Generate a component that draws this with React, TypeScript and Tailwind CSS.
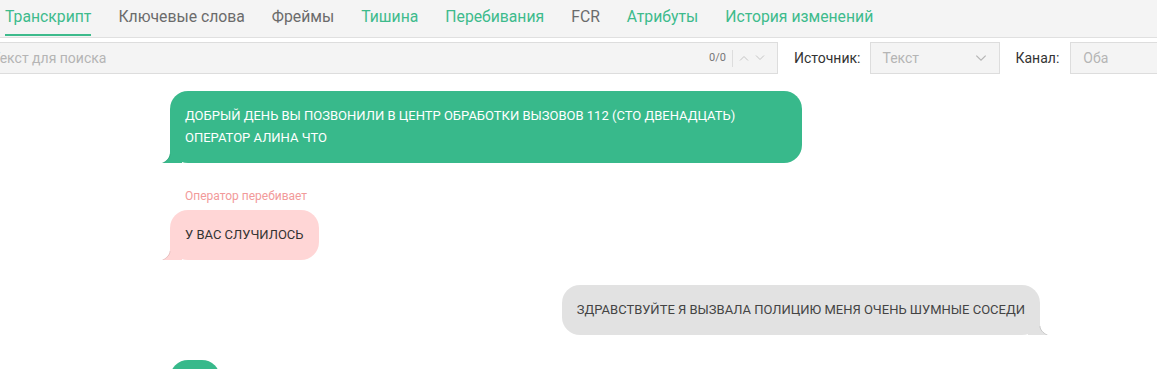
import React from 'react';

const tabs = [
  { label: 'Транскрипт', tone: 'active' },
  { label: 'Ключевые слова', tone: 'muted' },
  { label: 'Фреймы', tone: 'muted' },
  { label: 'Тишина', tone: 'green' },
  { label: 'Перебивания', tone: 'green' },
  { label: 'FCR', tone: 'muted' },
  { label: 'Атрибуты', tone: 'green' },
  { label: 'История изменений', tone: 'green' },
];

function Chevron({ dir, className }: { dir: 'up' | 'down'; className?: string }) {
  return (
    <svg width="10" height="6" viewBox="0 0 10 6" className={className} fill="none" stroke="currentColor" strokeWidth="1">
      {dir === 'up' ? <path d="M1 5.5 L5 1.5 L9 5.5" /> : <path d="M1 0.5 L5 4.5 L9 0.5" />}
    </svg>
  );
}

function TailLeft({ color }: { color: string }) {
  return (
    <svg width="20" height="20" viewBox="0 0 20 20" className="absolute left-[-8px] bottom-0">
      <path d="M8 0 L8 9 C8 14 5 18 0 20 L20 20 L20 0 Z" fill={color} />
      <path d="M8 11 C8 15 5 18 0.5 20" fill="none" stroke="rgba(0,0,0,0.12)" strokeWidth="0.8" />
    </svg>
  );
}

function TailRight({ color }: { color: string }) {
  return (
    <svg width="20" height="20" viewBox="0 0 20 20" className="absolute right-[-8px] bottom-0">
      <path d="M12 0 L12 9 C12 14 15 18 20 20 L0 20 L0 0 Z" fill={color} />
      <path d="M12 11 C12 15 15 18 19.5 20" fill="none" stroke="rgba(0,0,0,0.15)" strokeWidth="0.8" />
    </svg>
  );
}

export default function App() {
  return (
    <div className="w-[1157px] h-[369px] overflow-hidden bg-white font-['Roboto',sans-serif]">
      {/* Tabs */}
      <div className="h-[38px] bg-[#f4f4f4] border-b border-[#e0e0e0] flex items-stretch pl-[5px] gap-[27px]">
        {tabs.map((t) => (
          <div
            key={t.label}
            className={
              'relative flex items-center text-[15.75px] pb-[4px] ' +
              (t.tone === 'muted' ? 'text-[#6b6b6b]' : 'text-[#3dbb8c]')
            }
          >
            {t.label}
            {t.tone === 'active' && (
              <span className="absolute left-0 right-0 bottom-[1px] h-[2px] bg-[#3dbb8c]" />
            )}
          </div>
        ))}
      </div>

      {/* Search row */}
      <div className="flex items-center mt-[4px] h-[32px]">
        <div className="-ml-[20px] w-[798px] h-[32px] shrink-0 bg-[#f4f4f4] border border-[#dddddd] flex items-center pl-[11px] pr-[12px]">
          <span className="flex-1 text-[14px] text-[#b5b5b5] whitespace-nowrap">Текст для поиска</span>
          <span className="text-[11px] text-[#777]">0/0</span>
          <span className="mx-[6px] w-px h-[17px] bg-[#dddddd]" />
          <Chevron dir="up" className="text-[#c4c4c4]" />
          <Chevron dir="down" className="ml-[6px] text-[#c4c4c4]" />
        </div>
        <span className="ml-[16px] shrink-0 text-[14px] text-[#333]">Источник:</span>
        <div className="ml-[10px] w-[130px] shrink-0 h-[32px] bg-[#f4f4f4] border border-[#dddddd] flex items-center pl-[11px] pr-[12px]">
          <span className="flex-1 text-[14px] text-[#b5b5b5]">Текст</span>
          <Chevron dir="down" className="w-[12px] h-[7px] text-[#b5b5b5]" />
        </div>
        <span className="ml-[15px] shrink-0 text-[14px] text-[#333]">Канал:</span>
        <div className="ml-[11px] w-[120px] shrink-0 h-[32px] bg-[#f4f4f4] border border-[#dddddd] flex items-center pl-[12px]">
          <span className="text-[14px] text-[#b5b5b5]">Оба</span>
        </div>
      </div>

      {/* Transcript */}
      <div className="pl-[170px] pr-[117px] pt-[17px] flex flex-col gap-[25px] text-[13px] leading-[22px] uppercase">
        <div className="relative w-[632px] bg-[#38b98b] text-white rounded-[18px] px-[15px] py-[14px]">
          <TailLeft color="#38b98b" />
          <span className="relative">
            Добрый день вы позвонили в центр обработки вызовов 112 (сто двенадцать) оператор алина что
          </span>
        </div>

        <div className="flex flex-col items-start">
          <div className="pl-[15px] text-[12px] leading-[16px] normal-case text-[#f29a9a] mb-[6px]">Оператор перебивает</div>
          <div className="relative bg-[#ffd6d6] text-[#333] rounded-[18px] px-[15px] py-[14px]">
            <TailLeft color="#ffd6d6" />
            <span className="relative">У вас случилось</span>
          </div>
        </div>

        <div className="flex justify-end">
          <div className="relative bg-[#e2e2e2] text-[#444] rounded-[18px] px-[15px] py-[14px]">
            <TailRight color="#e2e2e2" />
            <span className="relative">Здравствуйте я вызвала полицию меня очень шумные соседи</span>
          </div>
        </div>

        <div className="flex">
          <div className="relative w-[50px] h-[50px] bg-[#38b98b] rounded-[18px]" />
        </div>
      </div>
    </div>
  );
}
